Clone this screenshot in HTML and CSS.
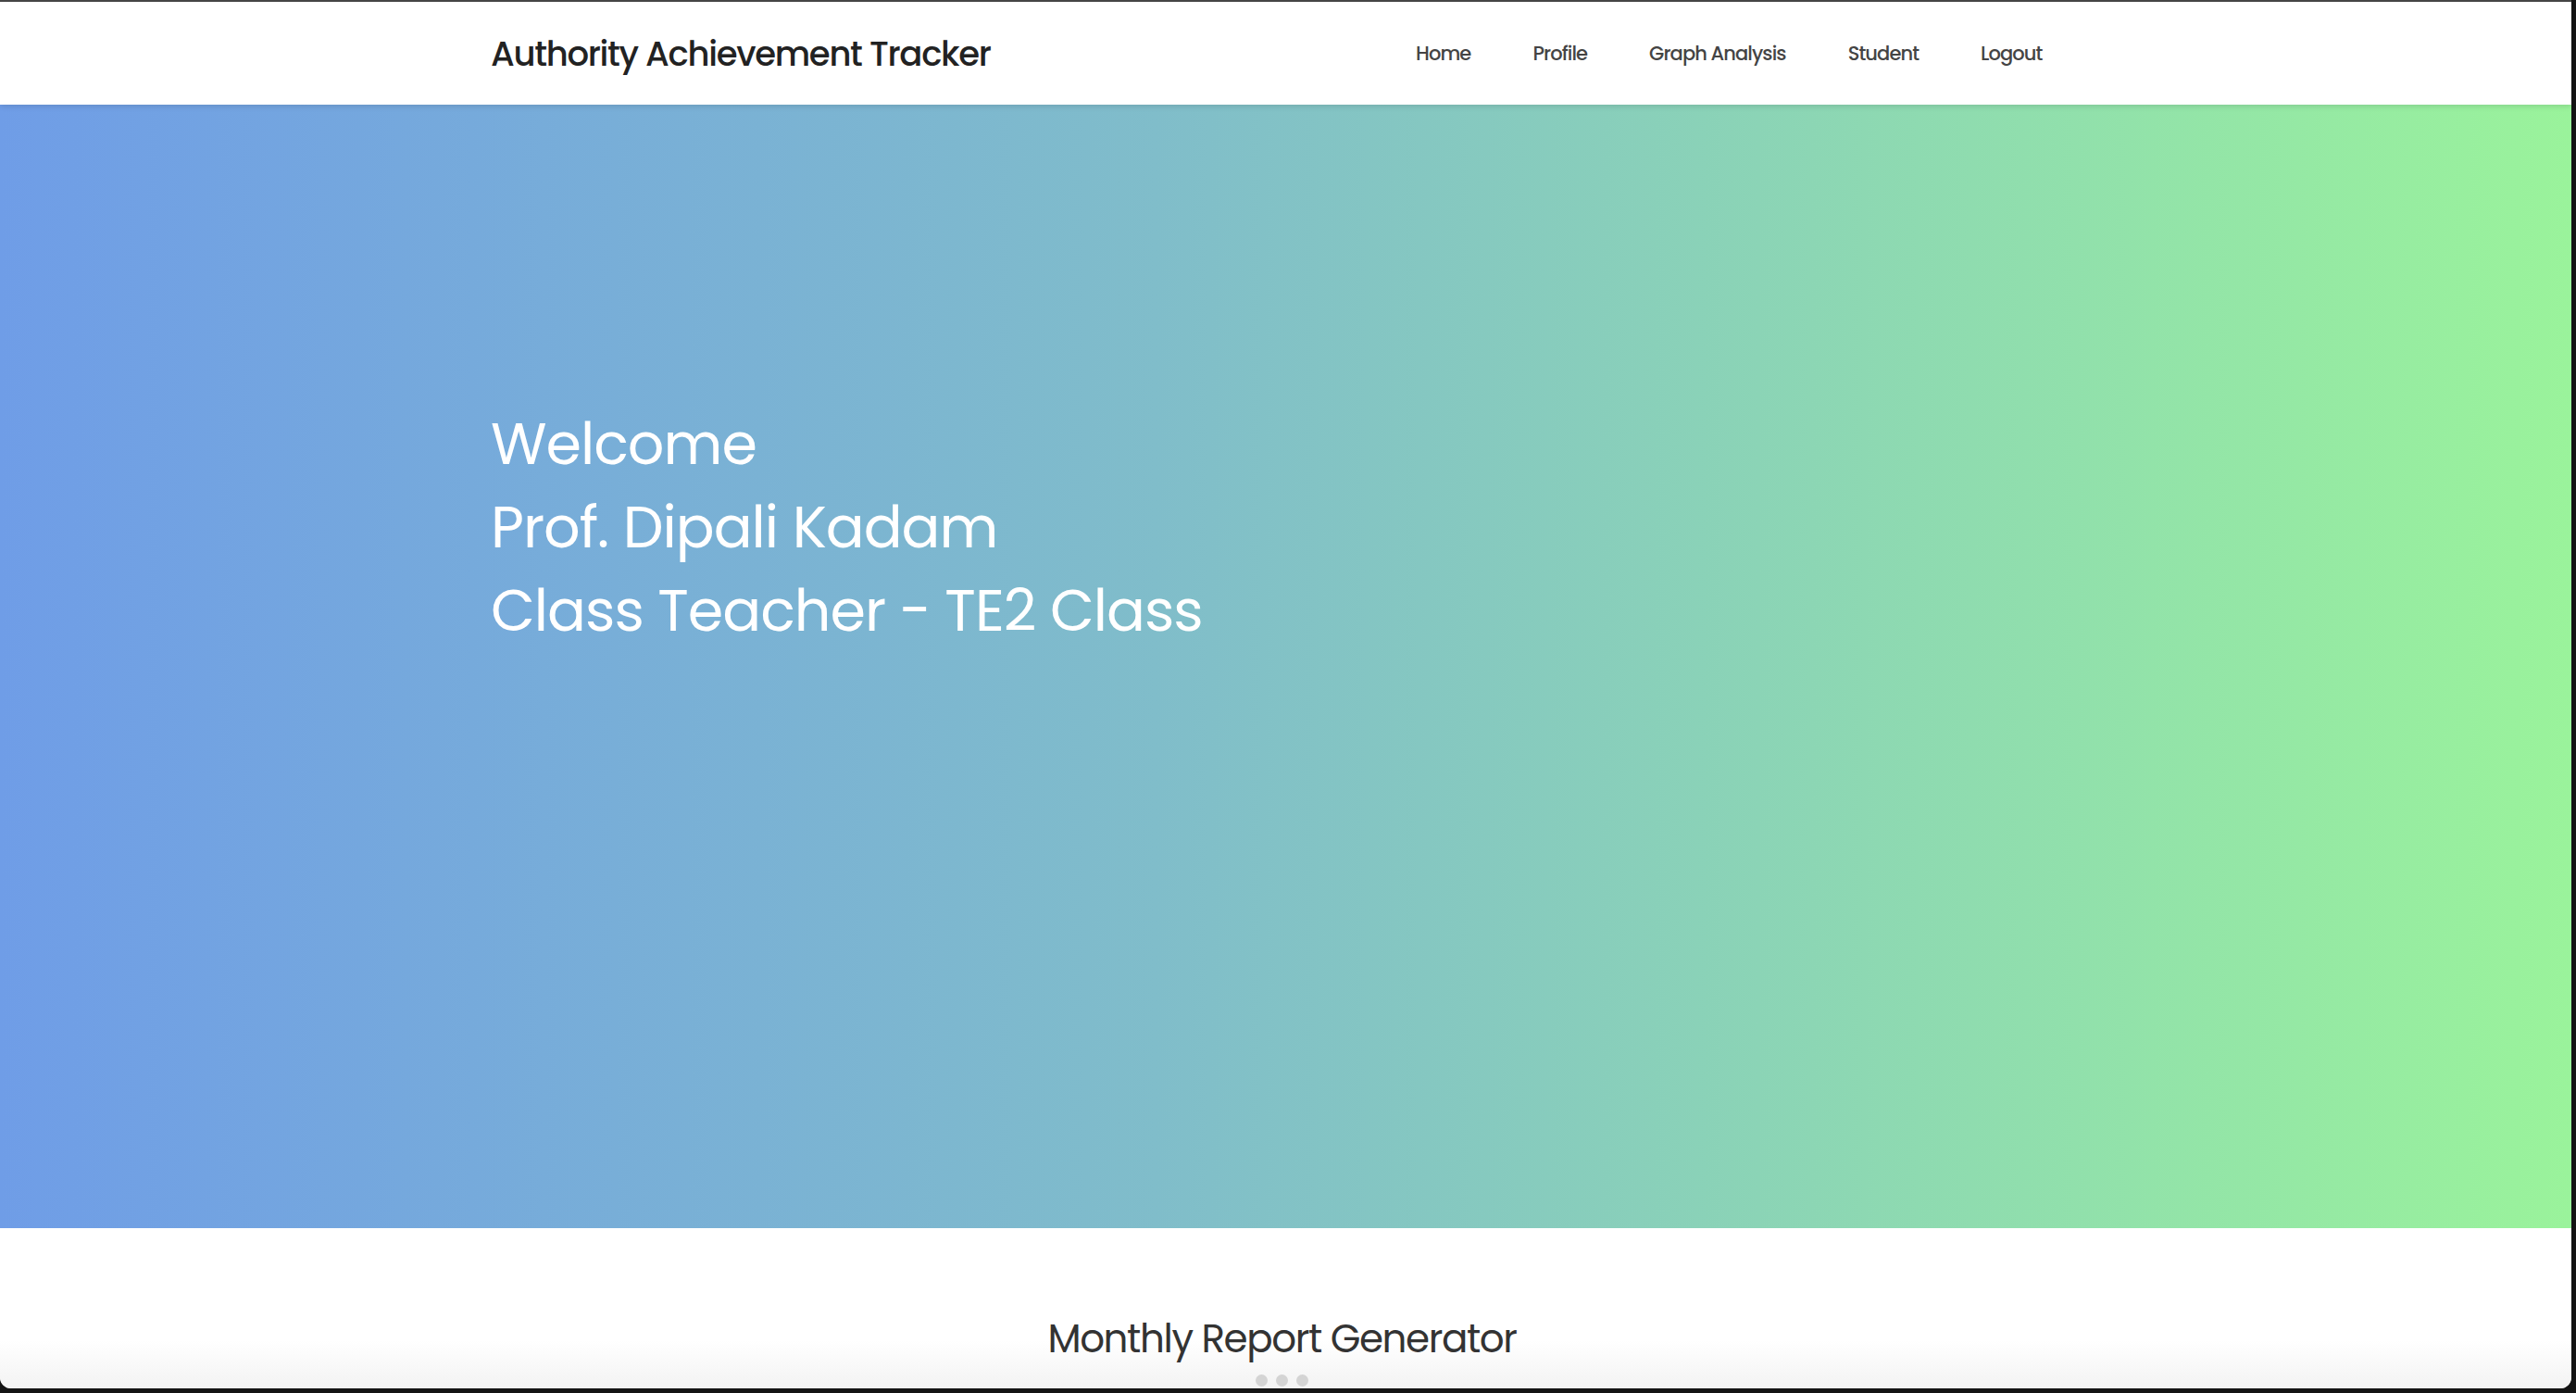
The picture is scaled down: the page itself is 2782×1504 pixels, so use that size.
FILE: index.html
```html
<!DOCTYPE html>
<html lang="en">
<head>
<meta charset="utf-8">
<title>Authority Achievement Tracker</title>
<link rel="stylesheet" href="styles.css">
</head>
<body>
<div class="window">
  <header class="topbar">
    <div class="container topbar-inner">
      <a class="brand" href="#">Authority Achievement Tracker</a>
      <nav class="nav">
        <a href="#">Home</a>
        <a href="#">Profile</a>
        <a href="#">Graph Analysis</a>
        <a href="#">Student</a>
        <a href="#">Logout</a>
      </nav>
    </div>
  </header>
  <section class="hero">
    <div class="container">
      <h1 class="hero-text">Welcome<br>Prof. Dipali Kadam<br>Class Teacher - TE2 Class</h1>
    </div>
  </section>
  <section class="report">
    <h2 class="report-title">Monthly Report Generator</h2>
    <div class="dots"><span></span><span></span><span></span></div>
  </section>
</div>
</body>
</html>
```
FILE: styles.css
```css
* { box-sizing: border-box; }
html, body { margin: 0; padding: 0; }
body {
  background: #141414;
  height: 1504px;
  overflow: hidden;
  font-family: "Poppins", "Open Sans", "Noto Sans", sans-serif;
}
.window {
  width: 2777px;
  height: 1499px;
  background: #fff;
  border-top: 2px solid #454545;
  border-radius: 0 0 12px 12px;
  overflow: hidden;
  display: flex;
  flex-direction: column;
}
.container {
  max-width: 1717px;
  margin: 0 auto;
  width: 100%;
}
.topbar {
  flex-shrink: 0;
  height: 111px;
  background: #fff;
  box-shadow: 0 2px 6px rgba(0,0,0,0.12);
  position: relative;
  z-index: 1;
  display: flex;
  align-items: center;
}
.topbar-inner {
  display: flex;
  align-items: center;
  justify-content: space-between;
}
.brand {
  font-size: 37px;
  font-weight: 500;
  color: #222;
  text-decoration: none;
  letter-spacing: -1.3px;
}
.nav {
  display: flex;
  padding-right: 8px;
}
.nav a {
  font-size: 21px;
  font-weight: 500;
  color: #444;
  text-decoration: none;
  letter-spacing: -0.9px;
  padding: 0 33.5px;
}
.hero {
  flex-shrink: 0;
  height: 1213px;
  background: linear-gradient(to right, #6f9de7 0%, #80bdca 45%, #9af39b 100%);
  padding-top: 322px;
}
.hero-text {
  margin: 0;
  color: #fff;
  font-size: 62px;
  font-weight: 400;
  letter-spacing: -1px;
  line-height: 90px;
}
.report {
  flex: 1;
  min-height: 0;
  overflow: hidden;
  background: linear-gradient(to bottom, #fff 0%, #fff 70%, #f3f3f3 100%);
  display: flex;
  flex-direction: column;
  align-items: center;
  padding-top: 90px;
  padding-right: 8px;
}
.report-title {
  margin: 0;
  font-size: 42px;
  font-weight: 400;
  color: #333;
  letter-spacing: -1.4px;
  line-height: 60px;
}
.dots {
  display: flex;
  gap: 9px;
  margin-top: 8px;
}
.dots span {
  flex-shrink: 0;
  width: 13px;
  height: 13px;
  border-radius: 50%;
  background: #d4d4d4;
}
```
